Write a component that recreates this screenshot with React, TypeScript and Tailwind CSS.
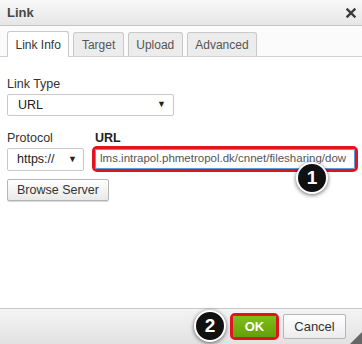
import React from "react";

const font = { fontFamily: '"Liberation Sans", Arial, sans-serif' };

function Badge({ n, className }: { n: string; className: string }) {
  return (
    <div
      className={
        "absolute flex h-[32px] w-[32px] items-center justify-center rounded-full border-[2px] border-white bg-[#111] text-[19px] font-bold text-white shadow-[0_1px_4px_rgba(0,0,0,0.6)] " +
        className
      }
    >
      {n}
    </div>
  );
}

export default function App() {
  return (
    <div className="relative flex h-[344px] w-[362px] flex-col overflow-hidden bg-white text-[#333]" style={font}>
      {/* Title bar */}
      <div className="flex h-[26px] shrink-0 items-center justify-between border-b border-[#c4c4c4] bg-gradient-to-b from-[#f8f8f8] to-[#e6e6e6] pl-[7px] pr-[6px]">
        <span className="text-[13px] font-bold text-[#474747]">Link</span>
        <svg width="10" height="10" viewBox="0 0 10 10">
          <path d="M1.5 1.5 L8.5 8.5 M8.5 1.5 L1.5 8.5" stroke="#3a3a3a" strokeWidth="2.4" strokeLinecap="square" />
        </svg>
      </div>

      {/* Tabs */}
      <div className="flex shrink-0 items-end gap-[4px] border-b border-[#d1d1d1] bg-[#fbfbfb] px-[7px] pt-[5px]">
        <div className="-mb-px flex h-[26px] items-center rounded-t-[3px] border border-b-0 border-[#c9c9c9] bg-white px-[7.5px] text-[12px] text-[#333]">
          Link Info
        </div>
        <div className="flex h-[24px] items-center rounded-t-[3px] border border-b-0 border-[#c9c9c9] bg-[#ececec] px-[7.5px] text-[12px] text-[#555]">
          Target
        </div>
        <div className="flex h-[24px] items-center rounded-t-[3px] border border-b-0 border-[#c9c9c9] bg-[#ececec] px-[7.5px] text-[12px] text-[#555]">
          Upload
        </div>
        <div className="flex h-[24px] items-center rounded-t-[3px] border border-b-0 border-[#c9c9c9] bg-[#ececec] px-[7.5px] text-[12px] text-[#555]">
          Advanced
        </div>
      </div>

      {/* Content */}
      <div className="flex flex-1 flex-col pl-[7px] pr-[4px] pt-[20px] text-[12.5px]">
        <div className="leading-[15px] text-[#333]">Link Type</div>
        <div className="mt-[2px] flex h-[22px] w-[167px] items-center justify-between rounded-[2px] border border-[#c9c9c9] bg-white pl-[10px] pr-[7px] text-[#222]">
          <span>URL</span>
          <span className="text-[9px] text-[#222]">▼</span>
        </div>

        <div className="mt-[15px] flex gap-[8px]">
          <div className="flex flex-col">
            <div className="leading-[15px]">Protocol</div>
            <div className="mt-[2px] flex h-[23px] w-[77px] items-center justify-between rounded-[2px] border border-[#c9c9c9] bg-white pl-[9px] pr-[6px] text-[#222]">
              <span>https://</span>
              <span className="text-[9px]">▼</span>
            </div>
          </div>
          <div className="flex min-w-0 flex-1 flex-col">
            <div className="pl-[3px] font-bold leading-[15px] text-[#222]">URL</div>
            <div className="rounded-[5px] border-[3px] border-[#e0131f]">
              <div className="flex h-[20px] items-center overflow-hidden whitespace-nowrap rounded-[2px] border border-[#5b9bd5] bg-white pl-[4px] text-[11.5px] text-[#555]">
                lms.intrapol.phmetropol.dk/cnnet/filesharing/dow
              </div>
            </div>
          </div>
        </div>

        <div className="mt-[7px]">
          <div className="inline-flex h-[22px] items-center rounded-[2px] border border-[#b5b5b5] bg-gradient-to-b from-[#ffffff] to-[#e9e9e9] px-[9px] text-[12.5px] text-[#333] shadow-[0_1px_0_rgba(0,0,0,0.15)]">
            Browse Server
          </div>
        </div>
      </div>

      {/* Footer */}
      <div className="flex h-[36px] shrink-0 items-center justify-end gap-[4px] border-t border-[#c8c8c8] bg-gradient-to-b from-[#f4f4f4] to-[#e2e2e2] pr-[16px]">
        <div className="rounded-[5px] border-[3px] border-[#e0131f]">
          <div className="flex h-[21px] w-[43px] items-center justify-center bg-gradient-to-b from-[#80bd17] to-[#62a10a] text-[13px] font-bold text-white">
            OK
          </div>
        </div>
        <div className="flex h-[25px] w-[63px] items-center justify-center rounded-[2px] border border-[#b5b5b5] bg-gradient-to-b from-[#ffffff] to-[#ececec] text-[13px] text-[#333]">
          Cancel
        </div>
      </div>

      {/* resize grip */}
      <div className="absolute bottom-0 right-0 h-0 w-0 border-b-[12px] border-l-[12px] border-b-[#666] border-l-transparent" />

      <Badge n="1" className="left-[296px] top-[162px]" />
      <Badge n="2" className="left-[194px] top-[310px]" />
    </div>
  );
}
